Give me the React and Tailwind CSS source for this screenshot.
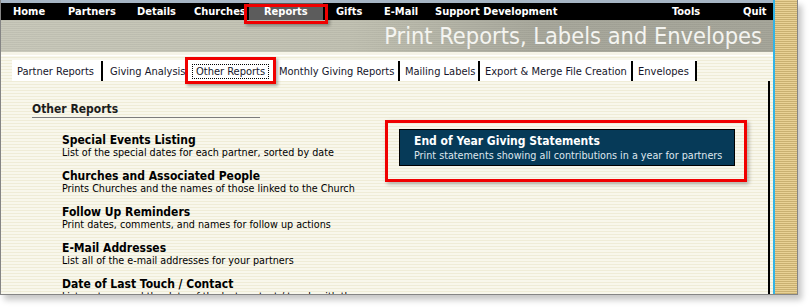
import React from "react"

const navItems = [
  { label: "Home", w: "w-[55px]" },
  { label: "Partners", w: "w-[69px]" },
  { label: "Details", w: "w-[57px]" },
  { label: "Churches", w: "w-[55px]" },
]

const navItemsAfter = [
  { label: "Gifts", w: "w-[48px]" },
  { label: "E-Mail", w: "w-[51px]" },
  { label: "Support Development", w: "w-[237px]" },
  { label: "Tools", w: "w-[71px]" },
  { label: "Quit", w: "w-[30px]" },
]

const tabs = [
  { label: "Partner Reports", w: "w-[91px]", pl: "pl-[5px]" },
  { label: "Giving Analysis", w: "w-[83px]", pl: "pl-[7px]" },
  { label: "Other Reports", w: "w-[90px]", pl: "pl-[10px]", active: true },
  { label: "Monthly Giving Reports", w: "w-[124px]", pl: "pl-[3px]" },
  { label: "Mailing Labels", w: "w-[80px]", pl: "pl-[5px]" },
  { label: "Export & Merge File Creation", w: "w-[153px]", pl: "pl-[5px]" },
  { label: "Envelopes", w: "w-[64px]", pl: "pl-[5px]" },
]

const reports = [
  {
    title: "Special Events Listing",
    desc: "List of the special dates for each partner, sorted by date",
  },
  {
    title: "Churches and Associated People",
    desc: "Prints Churches and the names of those linked to the Church",
  },
  {
    title: "Follow Up Reminders",
    desc: "Print dates, comments, and names for follow up actions",
  },
  {
    title: "E-Mail Addresses",
    desc: "List all of the e-mail addresses for your partners",
  },
  {
    title: "Date of Last Touch / Contact",
    desc: "List partners and the date of the last contact / touch with them",
  },
]

const stripes =
  "bg-[repeating-linear-gradient(180deg,#efecd7_0px,#efecd7_1px,#f8f7ec_1px,#f8f7ec_3px)]"

export default function App() {
  return (
    <div className="w-[810px] h-[307px] bg-white overflow-hidden font-['DejaVu_Sans_Condensed','Liberation_Sans',sans-serif]">
      {/* window */}
      <div className="w-[798px] h-[295px] flex border-l border-r border-b border-[#858585] shadow-[4px_5px_6px_rgba(0,0,0,0.22)] overflow-hidden">
        {/* main column */}
        <div className={`w-[772px] flex flex-col ${stripes}`}>
          {/* top nav */}
          <div className="border-t-[3px] border-[#a6b5c4]">
            <div className="h-[17px] bg-black flex items-stretch text-white font-bold text-[11px] leading-[17px]">
              <div className="w-[12px]" />
              {navItems.map((n) => (
                <div key={n.label} className={n.w}>
                  {n.label}
                </div>
              ))}
              <div className="w-[74px] pl-[15px] bg-[#5c5c5c] relative">
                Reports
                <div className="absolute -left-[5px] top-[1px] w-[84px] h-[20px] border-[3px] border-[#f00000] shadow-[2px_2px_3px_rgba(0,0,0,0.3)]" />
              </div>
              <div className="w-[13px]" />
              {navItemsAfter.map((n) => (
                <div key={n.label} className={n.w}>
                  {n.label}
                </div>
              ))}
            </div>
          </div>

          {/* page title band */}
          <div className="h-[32px] flex justify-end items-center pr-[11px] bg-[repeating-linear-gradient(180deg,rgba(0,0,0,0.05)_0px,rgba(0,0,0,0.05)_1px,transparent_1px,transparent_2px),linear-gradient(90deg,#c9c9bb_0%,#c3c3b4_45%,#a9a99d_70%,#a7a79b_100%)]">
            <span className="text-[23.4px] leading-[32px] text-[#f4f4f0]">
              Print Reports, Labels and Envelopes
            </span>
          </div>
          <div className="h-[4px] bg-[#f6f4e8] border-b border-white" />

          {/* tabs */}
          <div className="pt-[4px] pl-[11px] flex">
            <div className="flex h-[21px] bg-white text-[11px] text-[#16162a]">
              {tabs.map((t) => (
                <div
                  key={t.label}
                  className={`${t.w} ${t.pl} relative flex justify-between`}>
                  <span className="pt-[3px] leading-[18px] whitespace-nowrap">
                    {t.active ? (
                      <span className="inline-block border border-dotted border-black px-[3px] leading-[13px] -ml-[4px]">
                        {t.label}
                      </span>
                    ) : (
                      t.label
                    )}
                  </span>
                  <span className="w-[2px] h-[20px] bg-black self-end" />
                  {t.active && (
                    <div className="absolute -left-[1px] -top-[3px] w-[91px] h-[27px] border-[3px] border-[#f00000] shadow-[2px_2px_3px_rgba(0,0,0,0.3)]" />
                  )}
                </div>
              ))}
            </div>
          </div>

          {/* content */}
          <div className="flex-1 flex pl-[11px] pr-[3px] min-h-0">
            <div className="flex-1 border-r-2 border-black pt-[21px] overflow-hidden">
              <div className="ml-[20px] w-[228px] border-b border-[#7c7c7c] text-[12px] leading-[15px] font-bold text-[#1c1c1c]">
                Other Reports
              </div>
              <div className="flex mt-[11px]">
                <div className="pl-[50px] w-[387px] pt-[4px] flex flex-col gap-[10px] text-black">
                  {reports.map((r) => (
                    <div key={r.title} className="whitespace-nowrap">
                      <div className="text-[12px] leading-[14px] font-bold">
                        {r.title}
                      </div>
                      <div className="text-[10.7px] leading-[12px]">{r.desc}</div>
                    </div>
                  ))}
                </div>
                <div className="relative w-[336px] h-[37px] bg-[#063a58] border border-black pl-[14px] pt-[4px] text-white">
                  <div className="text-[12px] leading-[15px] font-bold">
                    End of Year Giving Statements
                  </div>
                  <div className="text-[10.7px] leading-[13px] text-[#dfe7ee]">
                    Print statements showing all contributions in a year for
                    partners
                  </div>
                  <div className="absolute -left-[15px] -top-[10px] w-[362px] h-[62px] border-[3px] border-[#f00000] shadow-[2px_2px_4px_rgba(0,0,0,0.3)]" />
                </div>
              </div>
            </div>
          </div>
        </div>

        {/* right scroll strip */}
        <div className="flex-1 border-l-2 border-[#33b4e6] bg-[repeating-linear-gradient(180deg,#e8d195_0px,#e8d195_1px,#c9b071_1px,#c9b071_2px)]" />
      </div>
    </div>
  )
}
